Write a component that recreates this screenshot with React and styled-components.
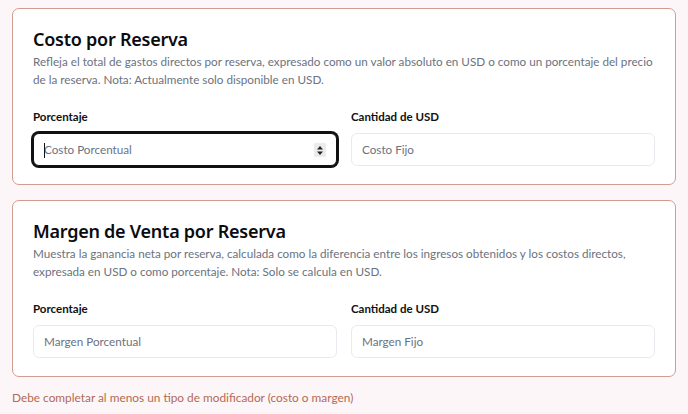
import React from "react";
import styled, { createGlobalStyle } from "styled-components";

const Global = createGlobalStyle`
  html, body { margin: 0; padding: 0; background: #fdf6f9; }
  body { font-family: Lato, "Noto Sans", sans-serif; color: #111827; }
  * { box-sizing: border-box; }
`;

const Page = styled.div`
  padding: 8px 12px 0 12px;
  display: flex;
  flex-direction: column;
  gap: 15px;
  width: 688px;
`;

const Card = styled.section`
  background: #fff;
  border: 1px solid #cf9d92;
  border-radius: 7px;
  padding: 17px 20px 18px 20px;
`;

const Title = styled.h2`
  margin: 0;
  font-family: "Noto Sans", sans-serif;
  font-size: 18px;
  line-height: 26px;
  font-weight: 600;
  color: #0b0b0f;
  letter-spacing: -0.25px;
`;

const Desc = styled.p`
  margin: 0;
  font-size: 11.7px;
  line-height: 18px;
  color: #6b7280;
`;

const Fields = styled.div`
  display: grid;
  grid-template-columns: 1fr 1fr;
  column-gap: 14px;
  margin-top: 21px;
`;

const Field = styled.div`
  display: flex;
  flex-direction: column;
  gap: 8px;
`;

const Label = styled.label`
  font-size: 11.5px;
  line-height: 16px;
  font-weight: 700;
  color: #111;
`;

const InputWrap = styled.div`
  position: relative;
  height: 33px;
  border-radius: 6px;
  border: 1px solid ${(p) => (p.$focused ? "#111" : "#e7ebf0")};
  box-shadow: ${(p) => (p.$focused ? "0 0 0 2px #111" : "none")};
  background: #fff;
  display: flex;
  align-items: center;
  padding: 0 10px;
`;

const Placeholder = styled.span`
  font-size: 11.7px;
  color: #6b7280;
  line-height: 1;
`;

const Caret = styled.span`
  position: absolute;
  left: 10px;
  top: 9px;
  width: 1px;
  height: 15px;
  background: #111;
`;

const Spinner = styled.span`
  position: absolute;
  right: 10px;
  top: 9px;
  width: 12px;
  height: 14px;
  background: #ececec;
  display: flex;
  align-items: center;
  justify-content: center;
`;

const ErrorText = styled.p`
  margin: -3px 0 0 0;
  font-size: 11.85px;
  line-height: 18px;
  color: #b26a52;
`;

function Input({ placeholder, focused, spinner }) {
  return (
    <InputWrap $focused={focused}>
      {focused && <Caret />}
      <Placeholder>{placeholder}</Placeholder>
      {spinner && (
        <Spinner>
          <svg width="8" height="11" viewBox="0 0 8 11">
            <path d="M4 1 L7 4.5 L1 4.5 Z" fill="#222" />
            <path d="M4 10 L7 6.5 L1 6.5 Z" fill="#222" />
          </svg>
        </Spinner>
      )}
    </InputWrap>
  );
}

function Section({ title, desc, left, right, focused }) {
  return (
    <Card>
      <Title>{title}</Title>
      <Desc>{desc}</Desc>
      <Fields>
        <Field>
          <Label>Porcentaje</Label>
          <Input placeholder={left} focused={focused} spinner={focused} />
        </Field>
        <Field>
          <Label>Cantidad de USD</Label>
          <Input placeholder={right} />
        </Field>
      </Fields>
    </Card>
  );
}

export default function App() {
  return (
    <>
      <Global />
      <Page>
        <Section
          title="Costo por Reserva"
          desc="Refleja el total de gastos directos por reserva, expresado como un valor absoluto en USD o como un porcentaje del precio de la reserva. Nota: Actualmente solo disponible en USD."
          left="Costo Porcentual"
          right="Costo Fijo"
          focused
        />
        <Section
          title="Margen de Venta por Reserva"
          desc="Muestra la ganancia neta por reserva, calculada como la diferencia entre los ingresos obtenidos y los costos directos, expresada en USD o como porcentaje. Nota: Solo se calcula en USD."
          left="Margen Porcentual"
          right="Margen Fijo"
        />
        <ErrorText>Debe completar al menos un tipo de modificador (costo o margen)</ErrorText>
      </Page>
    </>
  );
}
